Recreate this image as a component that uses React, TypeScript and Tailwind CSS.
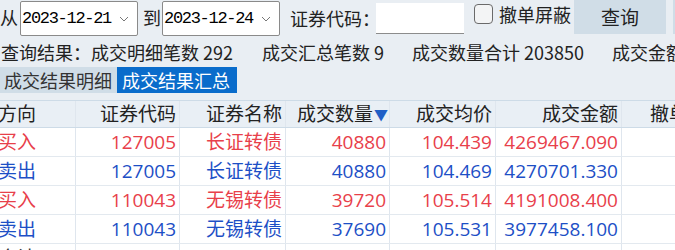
import React from "react";

type Side = "buy" | "sell";

interface Trade {
  side: Side;
  code: string;
  name: string;
  qty: string;
  price: string;
  amount: string;
}

const trades: Trade[] = [
  { side: "buy", code: "127005", name: "长证转债", qty: "40880", price: "104.439", amount: "4269467.090" },
  { side: "sell", code: "127005", name: "长证转债", qty: "40880", price: "104.469", amount: "4270701.330" },
  { side: "buy", code: "110043", name: "无锡转债", qty: "39720", price: "105.514", amount: "4191008.400" },
  { side: "sell", code: "110043", name: "无锡转债", qty: "37690", price: "105.531", amount: "3977458.100" },
];

const cols = ["w-[76px]", "w-[104px]", "w-[106px]", "w-[104px]", "w-[106px]", "w-[126px]", "w-[80px]"];

function DateSelect({ value }: { value: string }) {
  return (
    <div className="flex shrink-0 items-center w-[118px] h-[35px] mt-[1px] bg-white border border-[#8a8a8a] rounded-[2px] pl-[1px]">
      <span className="font-['Liberation_Mono',monospace] text-[17px] tracking-[-1.3px] text-black">{value}</span>
      <svg className="ml-auto mr-[8px]" width="10" height="6" viewBox="0 0 10 6">
        <polyline points="1,1 5,5 9,1" fill="none" stroke="#777" strokeWidth="1" />
      </svg>
    </div>
  );
}

function Cell({ i, children, className = "" }: { i: number; children?: React.ReactNode; className?: string }) {
  return (
    <div
      className={`${cols[i]} shrink-0 h-full flex items-center border-r border-[#dfe6ee] ${
        i === 0 ? "justify-start" : "justify-end pr-[3px]"
      } ${className}`}
    >
      {children}
    </div>
  );
}

export default function App() {
  return (
    <div className="w-[675px] h-[250px] overflow-hidden bg-[#e9eef3] font-['Noto_Sans_CJK_SC',sans-serif] text-[#222]">
      {/* Query bar */}
      <div className="flex items-start h-[37px] whitespace-nowrap">
        <span className="shrink-0 text-[18px] leading-[34px] w-[20px]">从</span>
        <DateSelect value="2023-12-21" />
        <span className="shrink-0 text-[18px] leading-[34px] ml-[5px] w-[19px]">到</span>
        <DateSelect value="2023-12-24" />
        <span className="shrink-0 text-[18px] leading-[36px] ml-[10px]">证券代码：</span>
        <div className="shrink-0 w-[88px] h-[31px] mt-[3px] ml-[-4px] bg-white border-b border-[#8c8c8c]" />
        <div className="shrink-0 w-[19px] h-[20px] mt-[4px] ml-[10px] rounded-[4px] border border-[#6a6a6a] bg-[#f3f4f5]" />
        <span className="shrink-0 text-[18px] leading-[28px] ml-[6px]">撤单屏蔽</span>
        <button className="shrink-0 w-[92px] h-[34px] ml-[3px] bg-[#d0dde7] text-[19px] text-[#222]">查询</button>
        <div className="shrink-0 w-[20px] h-[34px] ml-[7px] bg-[#d0dde7]" />
      </div>

      {/* Summary */}
      <div className="flex h-[30px] items-center text-[18px] whitespace-nowrap pl-[1px]">
        <span className="shrink-0">查询结果：成交明细笔数 292</span>
        <span className="shrink-0 ml-[29px]">成交汇总笔数 9</span>
        <span className="shrink-0 ml-[28px]">成交数量合计 203850</span>
        <span className="shrink-0 ml-[28px]">成交金额合计</span>
      </div>

      {/* Tabs */}
      <div className="flex h-[26px] text-[18px]">
        <div className="w-[117px] bg-[#d0dde7] text-[#333] flex items-center pl-[4px]">成交结果明细</div>
        <div className="w-[120px] bg-[#0a6ccb] text-white flex items-center pl-[5px]">成交结果汇总</div>
      </div>

      {/* Table */}
      <div className="mt-[7px] border-t border-[#cddbe7] font-['Open_Sans','Noto_Sans_CJK_SC',sans-serif] text-[19px]">
        <div className="flex h-[27px] bg-[#e9eff5] border-b border-[#cddbe7] whitespace-nowrap">
          <Cell i={0} className="border-[#cddbe7]"><span className="ml-[-2px]">方向</span></Cell>
          <Cell i={1} className="border-[#cddbe7]">证券代码</Cell>
          <Cell i={2} className="border-[#cddbe7]">证券名称</Cell>
          <Cell i={3} className="border-[#cddbe7] !pr-[1px]">
            成交数量<span className="text-[#1f5fc6] text-[14px] ml-[1px]">▼</span>
          </Cell>
          <Cell i={4} className="border-[#cddbe7]">成交均价</Cell>
          <Cell i={5} className="border-[#cddbe7]">成交金额</Cell>
          <Cell i={6} className="!justify-start pl-[28px] border-0">撤单</Cell>
        </div>
        {trades.map((t, idx) => (
          <div
            key={idx}
            className={`flex h-[29px] bg-white border-b border-[#e3e9ef] whitespace-nowrap ${
              t.side === "buy" ? "text-[#e8404a]" : "text-[#1d4fc6]"
            }`}
          >
            <Cell i={0}><span className="ml-[-2px]">{t.side === "buy" ? "买入" : "卖出"}</span></Cell>
            <Cell i={1}>{t.code}</Cell>
            <Cell i={2}>{t.name}</Cell>
            <Cell i={3}>{t.qty}</Cell>
            <Cell i={4}>{t.price}</Cell>
            <Cell i={5}>{t.amount}</Cell>
            <Cell i={6} className="border-0" />
          </div>
        ))}
        <div className="flex h-[29px] bg-white whitespace-nowrap text-[#333]">
          <Cell i={0}><span className="ml-[-2px]">合计</span></Cell>
          <Cell i={1} />
          <Cell i={2} />
          <Cell i={3} />
          <Cell i={4} />
          <Cell i={5} />
          <Cell i={6} className="border-0" />
        </div>
      </div>
    </div>
  );
}
